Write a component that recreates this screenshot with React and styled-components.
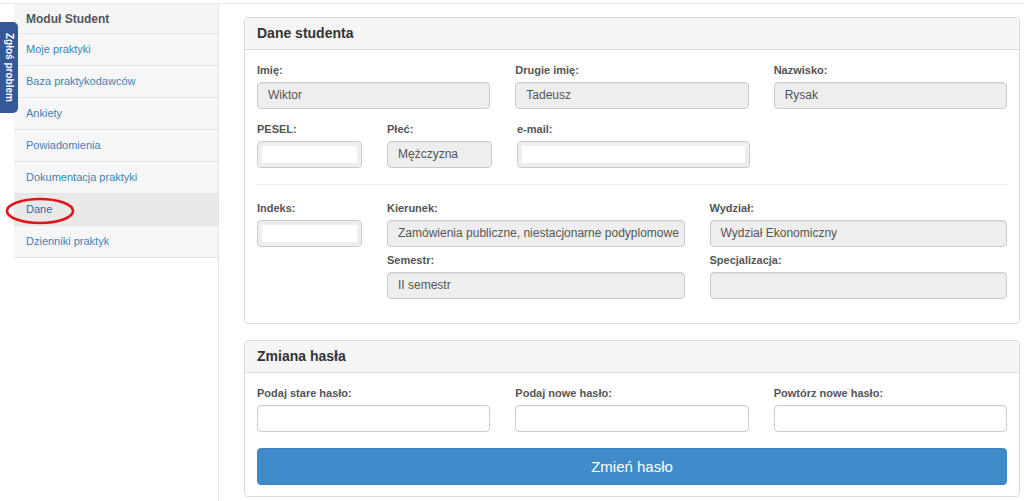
import styled, { createGlobalStyle } from "styled-components";

const Global = createGlobalStyle`
	html, body {
		margin: 0;
		padding: 0;
		background: #fff;
		font-family: "Liberation Sans", Arial, sans-serif;
	}
	* { box-sizing: border-box; }
`;

const Page = styled.div`
	position: relative;
	margin-top: 3px;
	border-top: 1px solid #eaeaea;
	display: flex;
	min-height: 498px;
	padding-left: 14px;
`;

const Sidebar = styled.nav`
	width: 205px;
	border-right: 1px solid #e6e6e6;
	flex-shrink: 0;
`;

const SideHeader = styled.div`
	height: 30px;
	padding: 8px 12px 0;
	background: #f5f5f5;
	border-bottom: 1px solid #e4e4e4;
	font-size: 12px;
	font-weight: bold;
	color: #555;
`;

const SideItem = styled.a`
	display: block;
	height: 32px;
	line-height: 31px;
	padding: 0 12px;
	font-size: 11px;
	color: ${(p) => (p.$active ? "#2f6fa3" : "#3c84b8")};
	background: ${(p) => (p.$active ? "#e9e9e9" : "#f6f6f6")};
	border-bottom: 1px solid #e4e4e4;
	text-decoration: none;
`;

const Main = styled.main`
	flex: 1;
	min-width: 0;
	padding: 13px 4px 0 25px;
`;

const Panel = styled.section`
	border: 1px solid #dcdcdc;
	border-radius: 4px;
	margin-bottom: 16px;
	background: #fff;
`;

const PanelHead = styled.h3`
	margin: 0;
	height: 32px;
	padding: 0 12px;
	line-height: 31px;
	font-size: 14px;
	font-weight: bold;
	color: #333;
	background: #f5f5f5;
	border-bottom: 1px solid #dcdcdc;
	border-radius: 4px 4px 0 0;
`;

const PanelBody = styled.div`
	padding: ${(p) => p.$pad || "13px 12px 11px"};
`;

const Row = styled.div`
	display: grid;
	grid-template-columns: ${(p) => p.$cols};
	column-gap: 25px;
	align-items: start;
	margin-bottom: ${(p) => p.$mb || "0"};
`;

const Column = styled.div`
	display: flex;
	flex-direction: column;
	min-width: 0;
	gap: ${(p) => p.$gap || "0"};
`;

const Field = styled.div`
	display: flex;
	flex-direction: column;
	min-width: 0;
`;

const Label = styled.label`
	font-size: 11px;
	font-weight: bold;
	color: #555;
	height: 14px;
	line-height: 14px;
	margin-bottom: 5px;
`;

const Input = styled.div`
	height: 27px;
	border: 1px solid #ccc;
	border-radius: 4px;
	background: ${(p) => (p.$editable ? "#fff" : "#eee")};
	padding: 0 10px;
	line-height: 25px;
	font-size: 12px;
	color: #555;
	white-space: nowrap;
	overflow: hidden;
	box-shadow: ${(p) =>
		p.$hidden ? "inset 0 0 0 4px #eee, inset 0 0 0 20px #fff" : "inset 0 1px 1px rgba(0,0,0,.05)"};
	${(p) => p.$hidden && "background: #fff;"}
`;

const Divider = styled.hr`
	border: 0;
	border-top: 1px solid #eee;
	margin: 16px 0 16px;
`;

const Button = styled.button`
	width: 100%;
	height: 37px;
	margin-top: 16px;
	border: 1px solid #3b82c1;
	border-radius: 4px;
	background: #428bca;
	color: #fff;
	font-family: inherit;
	font-size: 15px;
`;

const ReportTab = styled.div`
	position: absolute;
	left: 0;
	top: 18px;
	width: 18px;
	height: 91px;
	background: #35589a;
	border-radius: 0 5px 5px 0;
	color: #fff;
	font-size: 10px;
	font-weight: bold;
	writing-mode: vertical-rl;
	display: flex;
	align-items: center;
	justify-content: center;
`;

const Mark = styled.svg`
	position: absolute;
	left: 5px;
	top: 191px;
`;

const F = ({ label, value, ...rest }) => (
	<Field>
		<Label>{label}</Label>
		<Input {...rest}>{value}</Input>
	</Field>
);

export default function App() {
	const items = [
		"Moje praktyki",
		"Baza praktykodawców",
		"Ankiety",
		"Powiadomienia",
		"Dokumentacja praktyki",
		"Dane",
		"Dzienniki praktyk",
	];
	return (
		<>
			<Global />
			<Page>
				<Sidebar>
					<SideHeader>Moduł Student</SideHeader>
					{items.map((t) => (
						<SideItem key={t} $active={t === "Dane"}>
							{t}
						</SideItem>
					))}
				</Sidebar>
				<Main>
					<Panel>
						<PanelHead>Dane studenta</PanelHead>
						<PanelBody $pad="13px 12px 24px">
							<Row $cols="repeat(3, minmax(0, 1fr))" $mb="13px">
								<F label="Imię:" value="Wiktor" />
								<F label="Drugie imię:" value="Tadeusz" />
								<F label="Nazwisko:" value="Rysak" />
							</Row>
							<Row $cols="105px 105px minmax(0, 233px) 1fr">
								<F label="PESEL:" $hidden />
								<F label="Płeć:" value="Mężczyzna" />
								<F label="e-mail:" $hidden />
								<div />
							</Row>
							<Divider />
							<Row $cols="105px repeat(2, minmax(0, 1fr))">
								<F label="Indeks:" $hidden />
								<Column $gap="6px">
									<F label="Kierunek:" value="Zamówienia publiczne, niestacjonarne podyplomowe" />
									<F label="Semestr:" value="II semestr" />
								</Column>
								<Column $gap="6px">
									<F label="Wydział:" value="Wydział Ekonomiczny" />
									<F label="Specjalizacja:" value="" />
								</Column>
							</Row>
						</PanelBody>
					</Panel>
					<Panel>
						<PanelHead>Zmiana hasła</PanelHead>
						<PanelBody>
							<Row $cols="repeat(3, minmax(0, 1fr))">
								<F label="Podaj stare hasło:" $editable />
								<F label="Podaj nowe hasło:" $editable />
								<F label="Powtórz nowe hasło:" $editable />
							</Row>
							<Button>Zmień hasło</Button>
						</PanelBody>
					</Panel>
				</Main>
				<ReportTab>Zgłoś problem</ReportTab>
				<Mark width="72" height="32" viewBox="0 0 72 32">
					<ellipse cx="35" cy="16" rx="33" ry="12" fill="none" stroke="#e0151b" strokeWidth="2.6" />
				</Mark>
			</Page>
		</>
	);
}
